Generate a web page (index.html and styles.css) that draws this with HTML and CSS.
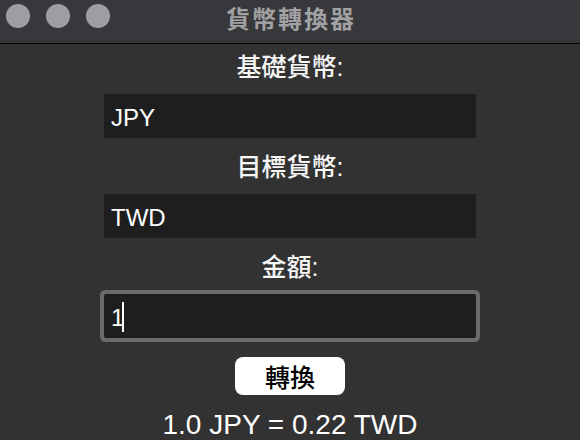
FILE: index.html
```html
<!DOCTYPE html>
<html lang="zh-Hant">
<head>
<meta charset="utf-8">
<title>貨幣轉換器</title>
<link rel="stylesheet" href="styles.css">
</head>
<body>
<div class="window">
  <header class="titlebar">
    <div class="lights">
      <span class="light"></span>
      <span class="light"></span>
      <span class="light"></span>
    </div>
    <div class="title">貨幣轉換器</div>
    <div class="spacer"></div>
  </header>
  <main class="content">
    <div class="group">
      <div class="label">基礎貨幣:</div>
      <div class="field">JPY</div>
    </div>
    <div class="group">
      <div class="label">目標貨幣:</div>
      <div class="field">TWD</div>
    </div>
    <div class="group">
      <div class="label">金額:</div>
      <div class="field focused">1<span class="caret"></span></div>
    </div>
    <button class="convert" type="button">轉換</button>
    <div class="result">1.0 JPY = 0.22 TWD</div>
  </main>
</div>
</body>
</html>
```
FILE: styles.css
```css
html, body {
  margin: 0;
  padding: 0;
  background: #323232;
}

.window {
  width: 580px;
  height: 440px;
  overflow: hidden;
  background: #323232;
  font-family: "Liberation Sans", "Noto Sans CJK TC", sans-serif;
  color: #ffffff;
}

.titlebar {
  height: 44px;
  box-sizing: border-box;
  display: grid;
  grid-template-columns: 1fr auto 1fr;
  align-items: start;
  background: #37383b;
  border-bottom: 1px solid #000000;
}

.lights {
  display: flex;
  gap: 16px;
  padding: 4px 0 0 6px;
}

.light {
  width: 24px;
  height: 24px;
  border-radius: 50%;
  background: #9d9ea2;
}

.title {
  font-family: "Noto Sans CJK TC", sans-serif;
  font-weight: 700;
  font-size: 24px;
  line-height: 35px;
  color: #a2a2a4;
  letter-spacing: 2px;
  padding-left: 2px;
}

.content {
  display: flex;
  flex-direction: column;
  align-items: center;
  padding-top: 8px;
}

.group {
  display: flex;
  flex-direction: column;
  align-items: center;
  gap: 12px;
  margin-bottom: 14px;
}

.label {
  font-size: 25px;
  font-weight: 500;
  line-height: 30px;
  height: 30px;
  color: #f6f6f6;
}

.field {
  width: 372px;
  height: 44px;
  box-sizing: border-box;
  padding: 4px 0 0 7px;
  line-height: 40px;
  font-size: 24px;
  background: #1e1e1e;
  color: #ffffff;
  display: flex;
  align-items: baseline;
}

.field.focused {
  box-shadow: 0 0 0 4px #6b6b6b;
  border-radius: 2px;
}

.caret {
  display: inline-block;
  width: 2px;
  height: 30px;
  background: #ffffff;
  margin-left: -2px;
  align-self: center;
  margin-top: -2px;
}

.convert {
  margin-top: 5px;
  width: 110px;
  height: 38px;
  border: none;
  border-radius: 8px;
  background: #ffffff;
  color: #000000;
  font-family: "Noto Sans CJK TC", sans-serif;
  font-size: 25px;
  font-weight: 500;
  line-height: 38px;
  padding: 0;
}

.result {
  margin-top: 14px;
  font-size: 28px;
  line-height: 32px;
  color: #ffffff;
}
```
